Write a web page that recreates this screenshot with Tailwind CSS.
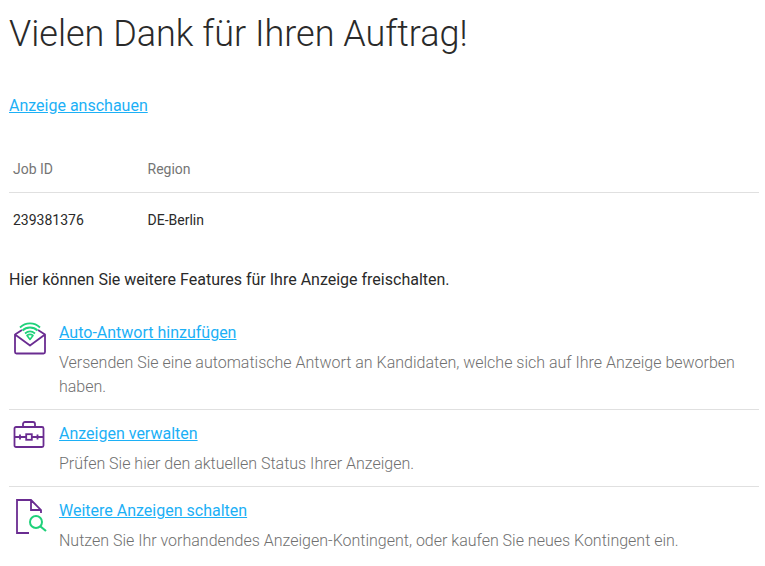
<!DOCTYPE html>
<html lang="de">
<head>
<meta charset="utf-8">
<script src="https://cdn.jsdelivr.net/npm/@tailwindcss/browser@4"></script>
</head>
<body class="bg-white font-['Roboto',sans-serif] text-[#2a2a2a] w-[765px] h-[566px] overflow-hidden">
<div class="pl-[9px] pr-[6px]">
  <h1 class="text-[36px] leading-[42px] font-light pt-[13px] text-[#2a2a2a]">Vielen Dank für Ihren Auftrag!</h1>
  <a href="#" class="block mt-[39px] text-[16px] leading-[24px] text-[#1cb0f6] underline w-max">Anzeige anschauen</a>
  <div class="mt-[29px] flex h-[46px] items-center border-b border-[#e0e0e0] text-[14px] text-[#757575]">
    <div class="w-[138.5px] pl-[4px]">Job ID</div><div>Region</div>
  </div>
  <div class="flex h-[54px] items-center text-[14px] text-[#2a2a2a]">
    <div class="w-[138.5px] pl-[4px]">239381376</div><div>DE-Berlin</div>
  </div>
  <p class="mt-[21px] text-[16px] leading-[24px]">Hier können Sie weitere Features für Ihre Anzeige freischalten.</p>

  <div class="mt-[28px] flex border-b border-[#e0e0e0] h-[90px]">
    <div class="w-[50px] shrink-0">
      <svg width="34" height="36" viewBox="0 0 34 36" fill="none" class="ml-[4px] mt-[1px]">
        <path d="M2 13.5 L9 9 M32 13.5 L25 9 M2 13.5 V31 a1.5 1.5 0 0 0 1.5 1.5 H30.5 a1.5 1.5 0 0 0 1.5 -1.5 V13.5 L17 24.5 Z" stroke="#6a2c91" stroke-width="1.8" stroke-linejoin="round"/>
        <path d="M7 6.5 C12.5 1 21.5 1 27 6.5 M9.5 9.5 C13.5 5.5 20.5 5.5 24.5 9.5 M12 12.5 C15 10 19 10 22 12.5" stroke="#1fd17a" stroke-width="1.8"/>
        <path d="M14 14.5 C16 13 18 13 20 14.5 L17 18.5 Z" fill="none" stroke="#1fd17a" stroke-width="1.6" stroke-linejoin="round"/>
      </svg>
    </div>
    <div>
      <a href="#" class="block mt-[1px] text-[16px] leading-[24px] text-[#1cb0f6] underline w-max">Auto-Antwort hinzufügen</a>
      <p class="mt-[6px] text-[16px] leading-[24px] font-light text-[#707070]">Versenden Sie eine automatische Antwort an Kandidaten, welche sich auf Ihre Anzeige beworben haben.</p>
    </div>
  </div>

  <div class="flex border-b border-[#e0e0e0] h-[77px]">
    <div class="w-[50px] shrink-0">
      <svg width="32" height="28" viewBox="0 0 32 28" fill="none" class="ml-[4px] mt-[11px]" stroke="#6a2c91" stroke-width="1.8">
        <path d="M10 6 V3 a2 2 0 0 1 2 -2 H20 a2 2 0 0 1 2 2 V6"/>
        <rect x="1.5" y="6" width="29" height="20" rx="1.5"/>
        <path d="M1.5 16 H13.2 M18.8 16 H30.5 M7 13.5 V18.5 M24.5 13.5 V18.5"/>
        <rect x="13.2" y="13.2" width="5.6" height="5.6"/>
      </svg>
    </div>
    <div>
      <a href="#" class="block mt-[12px] text-[16px] leading-[24px] text-[#1cb0f6] underline w-max">Anzeigen verwalten</a>
      <p class="mt-[6px] text-[16px] leading-[24px] font-light text-[#707070]">Prüfen Sie hier den aktuellen Status Ihrer Anzeigen.</p>
    </div>
  </div>

  <div class="flex">
    <div class="w-[50px] shrink-0">
      <svg width="34" height="38" viewBox="0 0 34 38" fill="none" class="ml-[6px] mt-[11px]">
        <path d="M14 35 H2 V2 H16 L26 12 V15 M16 2 V12 H26" stroke="#6a2c91" stroke-width="1.8"/>
        <circle cx="21" cy="24" r="6" stroke="#1fd17a" stroke-width="2"/>
        <path d="M25.5 28.5 L31 33" stroke="#1fd17a" stroke-width="2.2"/>
      </svg>
    </div>
    <div>
      <a href="#" class="block mt-[12px] text-[16px] leading-[24px] text-[#1cb0f6] underline w-max">Weitere Anzeigen schalten</a>
      <p class="mt-[6px] text-[16px] leading-[24px] font-light text-[#707070]">Nutzen Sie Ihr vorhandendes Anzeigen-Kontingent, oder kaufen Sie neues Kontingent ein.</p>
    </div>
  </div>
</div>
</body>
</html>
